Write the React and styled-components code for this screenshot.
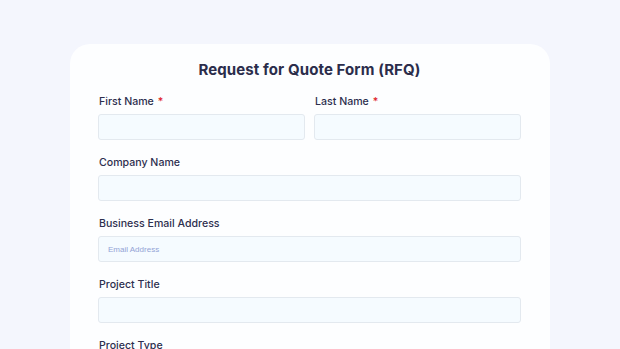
import React from "react";
import styled, { createGlobalStyle } from "styled-components";

const GlobalStyle = createGlobalStyle`
  html, body {
    margin: 0;
    padding: 0;
    background: #f4f6fd;
    overflow: hidden;
  }
  body {
    font-family: "Inter", "Noto Sans", sans-serif;
  }
`;

const Page = styled.div`
  width: 620px;
  height: 349px;
  padding-top: 44px;
  box-sizing: border-box;
  background: #f4f6fd;
  overflow: hidden;
`;

const Card = styled.div`
  width: 480px;
  margin: 0 auto;
  padding: 16px 29px 40px 28px;
  box-sizing: border-box;
  background: #fdfeff;
  border-radius: 20px;
`;

const Title = styled.h1`
  margin: 0 0 14px;
  font-size: 15px;
  line-height: 20px;
  font-weight: 700;
  text-align: center;
  color: #2b2d4b;
  letter-spacing: 0.1px;
`;

const Row = styled.div`
  display: grid;
  grid-template-columns: 1fr 1fr;
  column-gap: 9px;
`;

const FormGroup = styled.div`
  display: flex;
  flex-direction: column;
  margin-bottom: 15px;
`;

const Label = styled.label`
  display: block;
  font-size: 10.6px;
  line-height: 16px;
  font-weight: 500;
  color: #2d2f4e;
  margin: 0 0 4px 1px;
`;

const Required = styled.span`
  color: #e0262b;
  margin-left: 4px;
`;

const InputField = styled.input`
  display: block;
  width: 100%;
  height: 26px;
  box-sizing: border-box;
  padding: 0 9px;
  border: 1px solid #e3e9ef;
  border-radius: 3px;
  background: #f5fbff;
  font-family: "Liberation Sans", Arial, sans-serif;
  font-size: 8px;
  color: #2d2f4e;
  outline: none;

  &::placeholder {
    color: #93a3d6;
  }
`;

const Field = ({ id, label, required, placeholder }) => (
  <FormGroup>
    <Label htmlFor={id}>
      {label}
      {required && <Required>*</Required>}
    </Label>
    <InputField id={id} type="text" placeholder={placeholder} />
  </FormGroup>
);

const App = () => {
  return (
    <Page>
      <GlobalStyle />
      <Card>
        <Title>Request for Quote Form (RFQ)</Title>
        <Row>
          <Field id="firstName" label="First Name" required />
          <Field id="lastName" label="Last Name" required />
        </Row>
        <Field id="company" label="Company Name" />
        <Field id="email" label="Business Email Address" placeholder="Email Address" />
        <Field id="projectTitle" label="Project Title" />
        <Field id="projectType" label="Project Type" />
      </Card>
    </Page>
  );
};

export default App;
